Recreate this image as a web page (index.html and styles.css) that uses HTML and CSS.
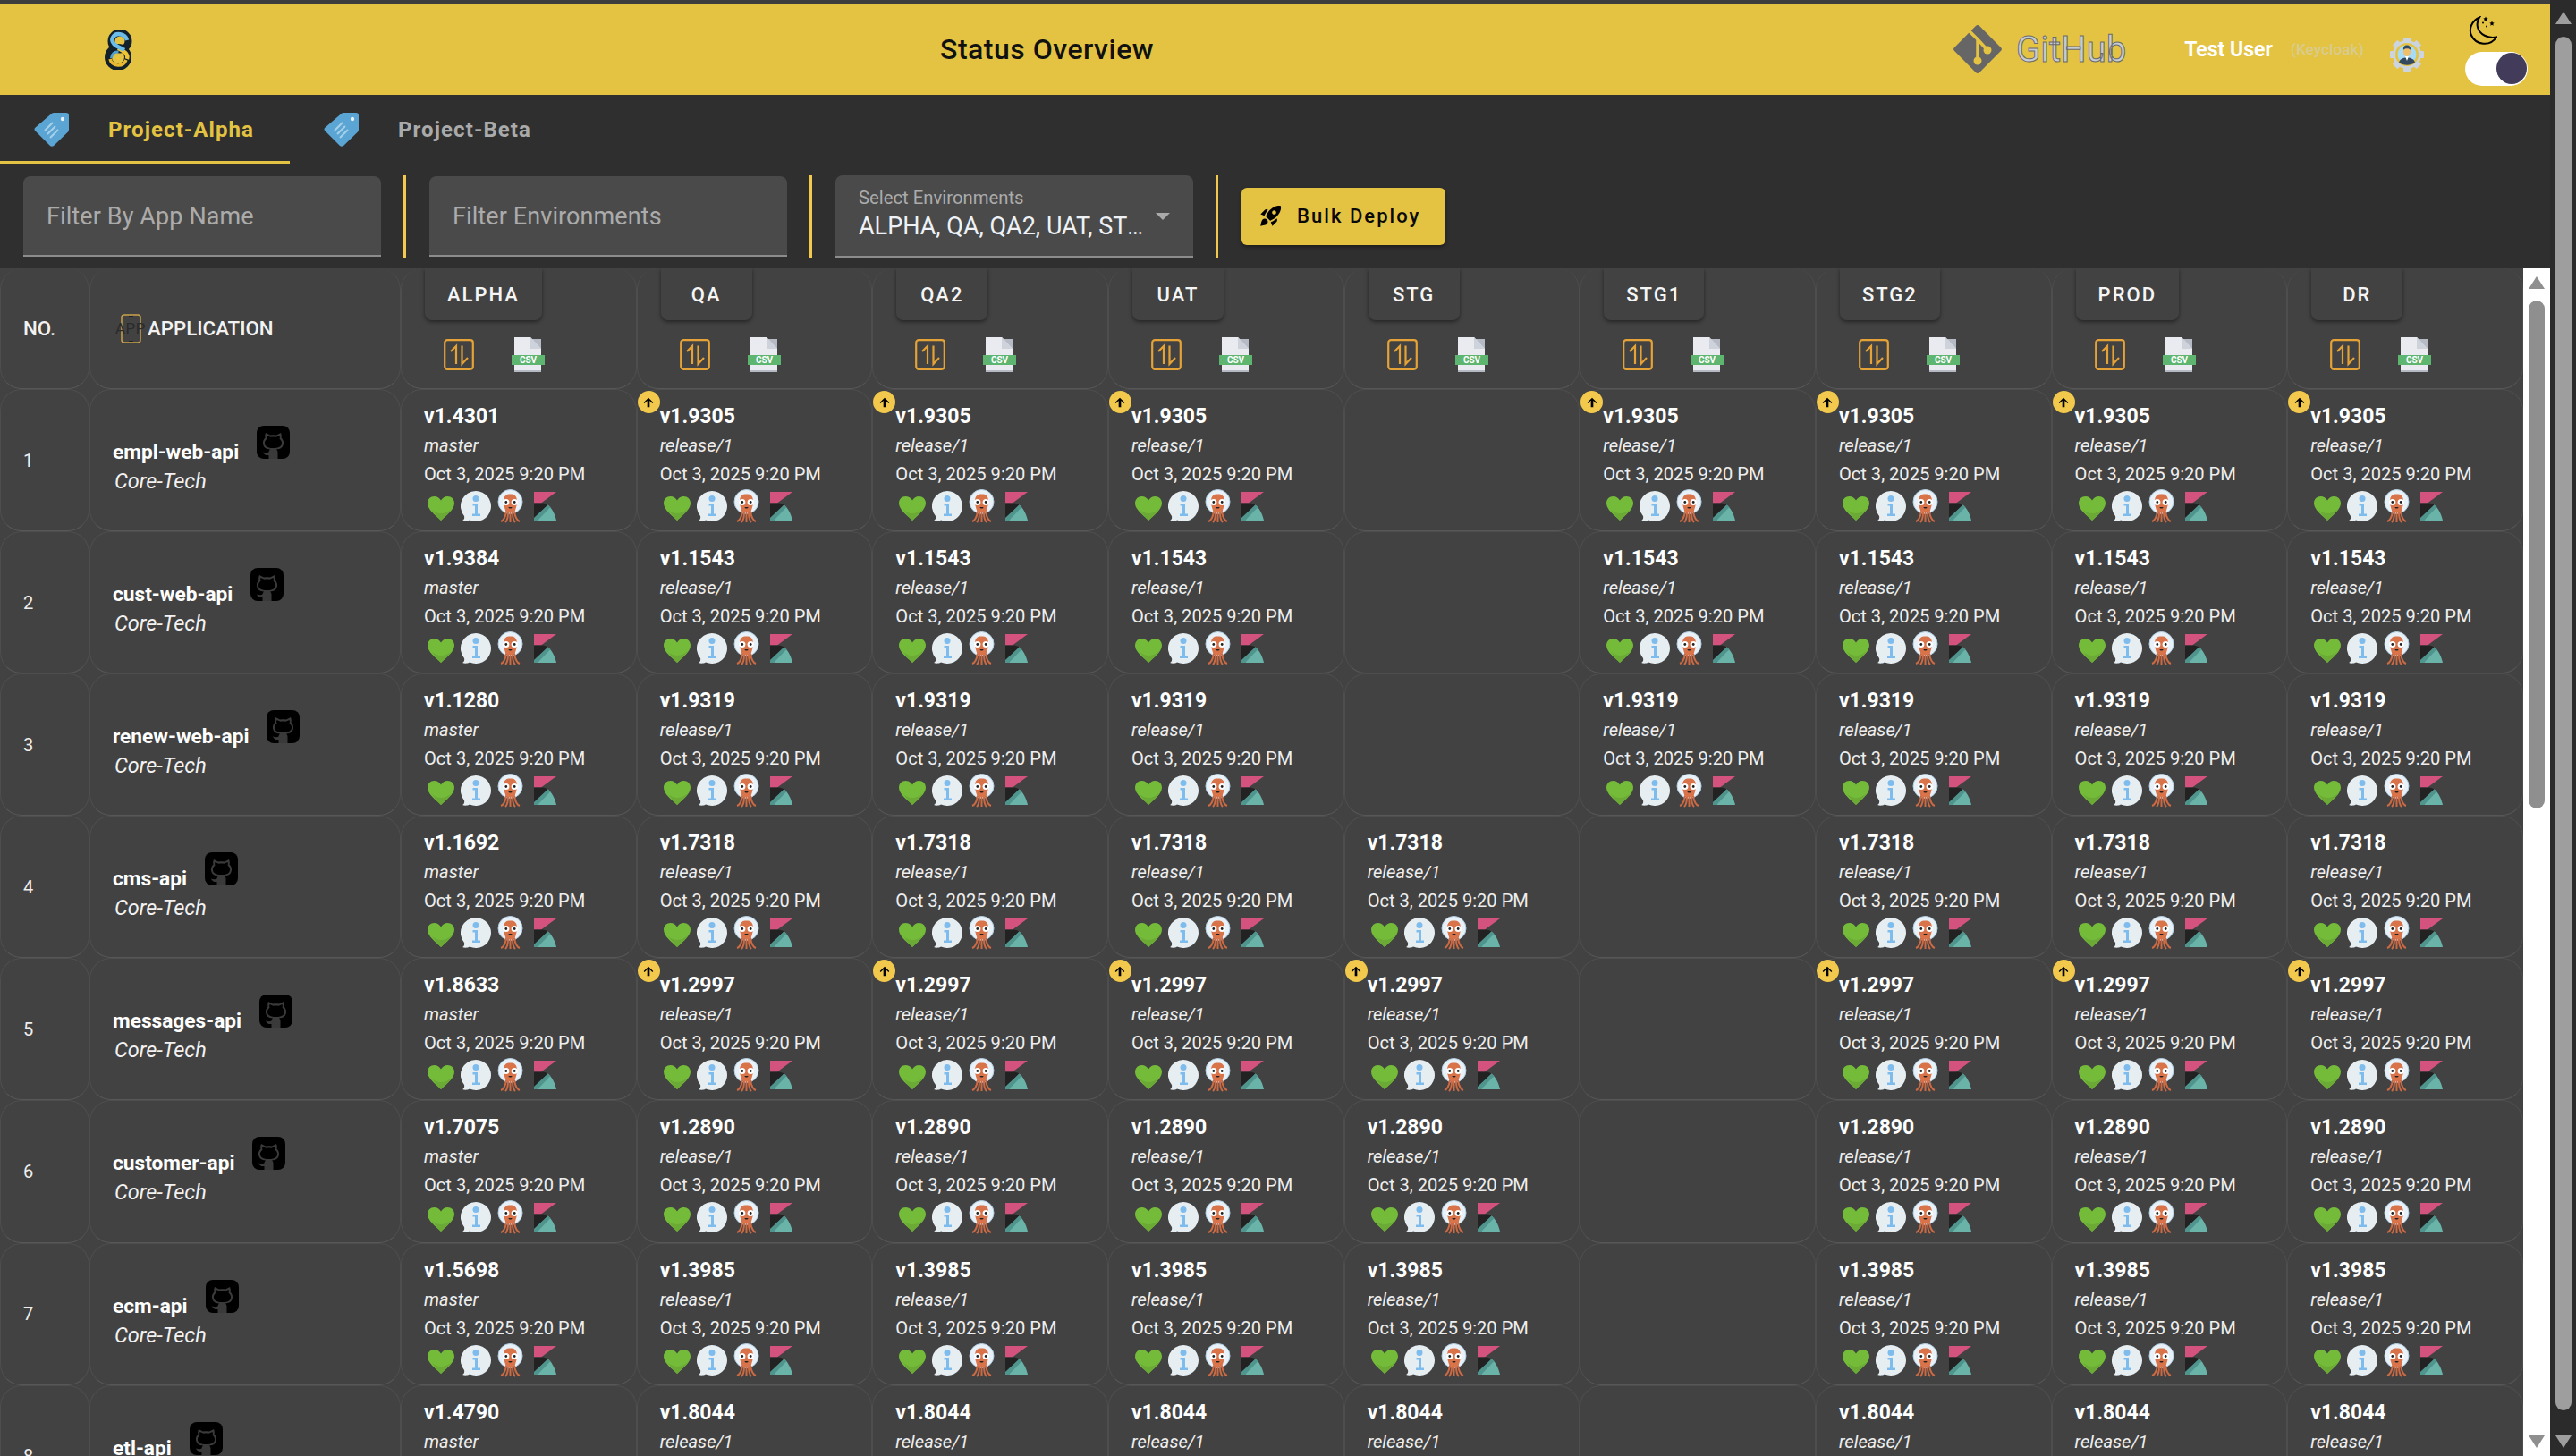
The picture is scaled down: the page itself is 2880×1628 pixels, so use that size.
FILE: index.html
```html
<!DOCTYPE html>
<html>
<head>
	<title>Status Overview</title>
	<link rel="stylesheet" href="styles.css">
</head>
<body>
	<svg class="sprite">
		<symbol id="icon-heart" viewBox="0 0 30 27">
			<path d="M15 27C9 21 0 15 0 7.5 0 3 3.4 0 7.5 0 10.800 0 13.500 1.800 15 4.500 16.500 1.800 19.200 0 22.500 0 26.600 0 30 3 30 7.500 30 15 21 21 15 27z" fill="#74bb3a"/>
			<path d="M5 15C12 21 20 20 27 14 24 19 19 23 15 27 11 23 8 19 5 15z" fill="#6aaa35"/>
		</symbol>
		<symbol id="icon-info" viewBox="0 0 34 34">
			<path d="M17 0a17 17 0 1 1-7 32.500C8 34 4 34 2 33c2-1 2.500-3 2-5A17 17 0 0 1 17 0z" fill="#e7eef2"/>
			<circle cx="17" cy="8.500" r="3.500" fill="#7fbcee"/>
			<path d="M13.500 14h5.500v11.500h3V28h-9v-2.500h3v-9h-2.500z" fill="#7fbcee"/>
		</symbol>
		<symbol id="icon-argo" viewBox="0 0 29 38">
			<circle cx="14.500" cy="14" r="13.500" fill="#e8f1f7" stroke="#b4d0e4"/>
			<path d="M7 14C7 7 10 5.500 14.500 5.500S22 7 22 14c0 5-2 8-2.500 12H9.500C9 22 7 19 7 14z" fill="#d8734a"/>
			<path d="M10 25c-1 6-3 10-6 11M12 26c0 5-1 9-3 11M14.500 26v11M17 26c0 5 1 9 3 11M19 25c1 6 3 10 6 11" stroke="#cc6a44" stroke-width="2" fill="none"/>
			<circle cx="9.800" cy="14.500" r="3.600" fill="#fff"/>
			<circle cx="19.200" cy="14.500" r="3.600" fill="#fff"/>
			<circle cx="9.800" cy="14.500" r="1.400" fill="#222"/>
			<circle cx="19.200" cy="14.500" r="1.400" fill="#222"/>
			<path d="M12.500 20h4c0 2-4 2-4 0z" fill="#222"/>
		</symbol>
		<symbol id="icon-kibana" viewBox="0 0 25 32">
			<path d="M0 0h25L8 12.500H0z" fill="#d4527e"/>
			<path d="M0 12.500h8c3 0 5 .5 7.500 2L0 29z" fill="#222"/>
			<path d="M15.500 14.500C20 18 23.500 25 25 32H4z" fill="#6ab3a9"/>
			<path d="M15.500 14.500L0 29v3h4l14.500-15c-1-1-2-1.800-3-2.500z" fill="#4f958e"/>
		</symbol>
		<symbol id="icon-sort" viewBox="0 0 34 35">
			<rect x="1.200" y="1.200" width="31.600" height="32.600" rx="3" fill="none" stroke="#e5a236" stroke-width="2.200"/>
			<path d="M14 28V8L8 14M20.500 7.500V28L27 21" fill="none" stroke="#e5a236" stroke-width="2.200"/>
		</symbol>
		<symbol id="icon-csv" viewBox="0 0 37 39">
			<path d="M3 2h30v37H3z" fill="#b5bac4"/>
			<path d="M3 0h18l12 13v24H3z" fill="#e9ebf0"/>
			<path d="M21 0l12 13H21z" fill="#ced2db"/>
			<path d="M0 20h37v11H0z" fill="#5eb56f"/>
			<text x="18.500" y="29" text-anchor="middle" class="csv-text">CSV</text>
		</symbol>
		<symbol id="icon-github" viewBox="0 0 37 37">
			<rect width="37" height="37" rx="8" fill="#000"/>
			<path d="M10 8l5 2.500c2.500-.5 4.500-.5 7 0L27 8c1 2.500 1 4 .5 5.500 2 2 2.800 4.200 2.500 6.500-.5 4.500-3.500 6-8 6.500 1 1 1.500 2 1.500 3.500V37h-10v-4c-3 .5-5-.5-6.500-3.500 2 .5 4.500 1.500 6.500 0 0-1 .5-2 1.500-3-4.500-.5-7.500-2-8-6.500-.3-2.300.5-4.500 2.500-6.500C9 12 9 10.500 10 8z" fill="#3a3a3a"/>
			<path d="M11.500 11l4 1.800c2-.4 4-.4 6 0l4-1.800c.5 1.500.5 2.500 0 3.500 2 2 2.800 3.500 2.500 5.500-.5 3.500-3.500 5-9.500 5s-9-1.500-9.500-5c-.3-2 .5-3.500 2.500-5.500-.5-1-.5-2 0-3.500z" fill="#000"/>
		</symbol>
		<symbol id="icon-tag" viewBox="0 0 39 38">
			<path d="M19 1.500Q20 0 22 0H36Q39 0 39 3V19Q39 20.500 38 21.500L22 37Q20 38.500 18 37L1 20Q0 18.500 1 17z" fill="#5aa5d3"/>
			<circle cx="32" cy="7" r="2.200" fill="#e8f2f8"/>
			<path d="M12 20L21 11M15 24L24 15M18 28L27 19" stroke="#a8d0e8" stroke-width="2"/>
		</symbol>
	</svg>

	<div class="page">
		<div class="topline"></div>
		<header class="topbar">
			<svg class="logo" viewBox="0 0 34 44">
				<circle cx="18" cy="12" r="9.500" fill="none" stroke="#12202c" stroke-width="8"/>
				<circle cx="16" cy="30" r="11" fill="none" stroke="#12202c" stroke-width="8"/>
				<path d="M26 32C28 26 22 23 16 20" fill="none" stroke="#f0c534" stroke-width="4.500"/>
				<path d="M7 32a9.500 9.500 0 0 0 18 1" fill="none" stroke="#e8b92e" stroke-width="3.500"/>
				<path d="M26 11C24 3 13 2 10 8 7 15 16 18 23 22" fill="none" stroke="#6cbcea" stroke-width="4.500"/>
				<path d="M8.500 31a7 7 0 0 1 8-7" fill="none" stroke="#4f9fd0" stroke-width="3"/>
				<circle cx="16" cy="31" r="2" fill="#f0c534"/>
			</svg>
			<h1 class="title">Status Overview</h1>
			<svg class="git-mark" viewBox="0 0 56 56">
				<rect x="8.200" y="8.200" width="39.600" height="39.600" rx="3" transform="rotate(45 28 28)" fill="#666666"/>
				<path d="M19 8l9 9v23M28 17l11 12" fill="none" stroke="#e4c342" stroke-width="3.500"/>
				<circle cx="28" cy="41" r="4.500" fill="#e4c342"/>
				<circle cx="39" cy="29" r="4.500" fill="#e4c342"/>
			</svg>
			<span class="git-text">GitHub</span>
			<span class="user-name">Test User</span>
			<span class="user-realm">(Keycloak)</span>
			<svg class="avatar" viewBox="0 0 38 38">
				<g fill="#ccd4e0">
					<rect x="15" y="0" width="8" height="38" rx="1"/>
					<rect x="15" y="0" width="8" height="38" rx="1" transform="rotate(45 19 19)"/>
					<rect x="15" y="0" width="8" height="38" rx="1" transform="rotate(90 19 19)"/>
					<rect x="15" y="0" width="8" height="38" rx="1" transform="rotate(135 19 19)"/>
					<circle cx="19" cy="19" r="16"/>
				</g>
				<circle cx="19" cy="19" r="13" fill="#e4c342"/>
				<circle cx="19" cy="19" r="10.500" fill="#a6dcf6"/>
				<path d="M10 28c1-4 4-5 9-6 5 1 8 2 9 6-5 3.500-13 3.500-18 0z" fill="#34495e"/>
				<path d="M17 21h4l-2 5z" fill="#fff"/>
				<ellipse cx="19" cy="15.500" rx="4" ry="5.500" fill="#f1be6c"/>
				<path d="M15 14c-.5-4 1.500-5.500 4-5.500s4.500 1.500 4 5.500c-1-2.500-7-2.500-8 0z" fill="#34495e"/>
			</svg>
			<div class="theme">
				<svg class="moon" viewBox="0 0 32 32">
					<path d="M12 1C3 5 0 14 3 21 8 32 24 34 31 23 22 25 12 20 10 12 9 8 10 4 12 1z" fill="none" stroke="#000" stroke-width="2"/>
					<path d="M19 0l.8 1.800 1.900.2-1.400 1.300.4 1.900-1.700-1-1.700 1 .4-1.900L16.300 2l1.900-.2zM26 5l.8 1.800 1.900.2-1.400 1.300.4 1.900-1.700-1-1.700 1 .4-1.900L23.300 7l1.900-.2z" fill="#000"/>
					<circle cx="16" cy="7" r="1" fill="#000"/>
					<circle cx="20" cy="11" r="1" fill="#000"/>
				</svg>
				<div class="switch"><span class="knob"></span></div>
			</div>
		</header>

		<nav class="tabs">
			<a class="tab tab-active"><svg class="tab-icon"><use href="#icon-tag"></use></svg>Project-Alpha</a>
			<a class="tab"><svg class="tab-icon"><use href="#icon-tag"></use></svg>Project-Beta</a>
		</nav>

		<div class="filters">
			<input class="field" type="text" placeholder="Filter By App Name">
			<span class="divider"></span>
			<input class="field" type="text" placeholder="Filter Environments">
			<span class="divider"></span>
			<div class="select">
				<label class="select-label">Select Environments</label>
				<div class="select-value">ALPHA, QA, QA2, UAT, STG, STG1, STG2, PROD, DR</div>
				<span class="caret"></span>
			</div>
			<span class="divider"></span>
			<button class="deploy">
				<svg class="rocket" viewBox="0 0 24 24"><path d="M9.190 6.350c-2.040 2.290-3.440 5.580-3.570 5.890L2 10.690l4.050-4.050c.47-.47 1.150-.68 1.810-.55l1.330.26zM11.170 17s3.740-1.550 5.890-3.700c5.400-5.400 4.500-9.620 4.210-10.570-.95-.3-5.170-1.190-10.570 4.210C8.550 9.090 7 12.830 7 12.830L11.170 17zm6.480-2.190c-2.290 2.040-5.580 3.440-5.890 3.570L13.310 22l4.050-4.050c.47-.47.68-1.150.55-1.810l-.26-1.330zM9 18c0 .83-.34 1.580-.88 2.120C6.940 21.300 2 22 2 22s.7-4.940 1.880-6.120C4.420 15.340 5.170 15 6 15c1.660 0 3 1.340 3 3zm4-9c0-1.100.9-2 2-2s2 .9 2 2-.9 2-2 2-2-.9-2-2z"/></svg>
				Bulk Deploy
			</button>
		</div>

		<div class="board">
			<div class="table" id="table"></div>
			<div class="inner-scroll">
				<span class="arrow-up"></span>
				<span class="inner-thumb"></span>
				<span class="arrow-down"></span>
			</div>
		</div>
	</div>

	<div class="page-scroll">
		<span class="arrow-up"></span>
		<span class="page-thumb"></span>
		<span class="arrow-down"></span>
	</div>

	<script src="app.js"></script>
</body>
</html>
```

FILE: styles.css
```css
* {
	box-sizing: border-box;
}

body {
	margin: 0;
	height: 1628px;
	display: flex;
	overflow: hidden;
	background-color: #2f2f2f;
	font-family: Roboto, "Liberation Sans", sans-serif;
	color: #eeeeee;
}

.sprite {
	display: none;
}

.page {
	width: 2851px;
	display: flex;
	flex-direction: column;
}

.topline {
	height: 4px;
	background-color: #3d3d3d;
}

/* yellow bar */
.topbar {
	height: 102px;
	flex: none;
	display: flex;
	align-items: center;
	background-color: #e4c342;
}
.logo {
	width: 34px;
	height: 44px;
	margin-left: 116px;
	margin-top: 1px;
}
.title {
	margin: 0 0 0 901px;
	font-size: 32px;
	font-weight: 500;
	letter-spacing: 0.5px;
	color: #111111;
}
.git-mark {
	width: 56px;
	height: 56px;
	margin-left: 893px;
}
.git-text {
	margin-left: 15px;
	font-size: 40px;
	color: #c6ccd3;
	-webkit-text-stroke: 1px #6b6b6b;
}
.user-name {
	margin-left: 65px;
	font-size: 23px;
	font-weight: 700;
	color: #ffffff;
}
.user-realm {
	margin-left: 20px;
	font-size: 17.300px;
	font-weight: 500;
	color: #d9cb8f;
}
.avatar {
	width: 38px;
	height: 38px;
	margin-left: 29px;
	margin-top: 12px;
}
.theme {
	margin-left: 46px;
	width: 70px;
	display: flex;
	flex-direction: column;
	align-items: flex-start;
	gap: 7px;
	margin-top: 3px;
}
.moon {
	width: 32px;
	height: 33px;
	margin-left: 4px;
}
.switch {
	width: 70px;
	height: 38px;
	padding: 1px;
	display: flex;
	justify-content: flex-end;
	border-radius: 19px;
	background-color: #ffffff;
}
.knob {
	width: 34px;
	height: 35px;
	border-radius: 50%;
	background-color: #423b5a;
}

/* project tabs */
.tabs {
	height: 77px;
	flex: none;
	display: flex;
}
.tab {
	display: flex;
	align-items: center;
	gap: 44px;
	padding: 3px 40px 0 38px;
	font-size: 24px;
	font-weight: 700;
	letter-spacing: 1.080px;
	color: #aaaaaa;
	border-bottom: 3px solid transparent;
}
.tab-active {
	color: #e4c342;
	border-bottom-color: #e4c342;
}
.tab-icon {
	width: 39px;
	height: 38px;
}

/* filter row */
.filters {
	height: 92px;
	flex: none;
	margin-top: 13px;
	padding-left: 26px;
	display: flex;
	align-items: center;
}
.field {
	width: 400px;
	height: 90px;
	padding: 2px 26px 0;
	background-color: #4a4a4a;
	border: 0;
	border-bottom: 2px solid #8c8c8c;
	border-radius: 8px 8px 0 0;
	font-family: inherit;
	font-size: 27px;
	letter-spacing: 0.100px;
	color: #eeeeee;
}
.field::placeholder {
	color: #ababab;
	opacity: 1;
}
.divider {
	width: 3px;
	height: 92px;
	margin: 0 26px 0 25px;
	background-color: #f2c94c;
}
.select {
	position: relative;
	width: 400px;
	height: 92px;
	padding: 13px 26px 0;
	background-color: #4a4a4a;
	border-bottom: 2px solid #8c8c8c;
	border-radius: 8px 8px 0 0;
}
.select-label {
	display: block;
	font-size: 20.300px;
	line-height: 24px;
	color: #ababab;
}
.select-value {
	width: 322px;
	margin-top: 3px;
	font-size: 27px;
	line-height: 34px;
	color: #eef2f6;
	white-space: nowrap;
	overflow: hidden;
	text-overflow: ellipsis;
}
.caret {
	position: absolute;
	top: 42px;
	right: 26px;
	border-left: 8px solid transparent;
	border-right: 8px solid transparent;
	border-top: 8px solid #aaaaaa;
}
.deploy {
	width: 228px;
	height: 64px;
	padding: 0 0 2px 19px;
	display: flex;
	align-items: center;
	gap: 15px;
	background-color: #e4c342;
	border: 0;
	border-radius: 6px;
	box-shadow: 0 2px 4px rgba(0, 0, 0, 0.4);
	font-family: inherit;
	font-size: 22px;
	font-weight: 500;
	letter-spacing: 2.050px;
	color: #0a0a0a;
}
.rocket {
	width: 28px;
	height: 28px;
}

/* status table */
.board {
	flex: 1;
	min-height: 0;
	margin-top: 12px;
	display: flex;
	background-color: #424242;
}
.table {
	width: 2821px;
	flex: none;
	display: grid;
	grid-template-columns: 100px 348px repeat(9, 263.67px);
	grid-template-rows: 135px;
	grid-auto-rows: 159.1px;
	overflow: hidden;
}
.cell {
	position: relative;
	border: 1px solid #4e4e4e;
	border-bottom-color: #575757;
	border-radius: 24px;
	background-color: #424242;
}
.head {
	border-top: 0;
}
.head-text {
	font-size: 22.300px;
	font-weight: 500;
	color: #f2f2f2;
}
.no-head {
	display: flex;
	align-items: center;
	padding-left: 25px;
}
.app-head {
	display: flex;
	align-items: center;
	gap: 2px;
	padding-left: 28px;
}
.app-mark {
	display: grid;
	place-items: center;
	width: 34px;
}
.app-mark svg, .app-mark span {
	grid-area: 1 / 1;
}
.app-mark svg {
	width: 23px;
	height: 33px;
}
.app-mark span {
	font-size: 17px;
	letter-spacing: 0.5px;
	color: #2b2b2b;
}
.env-head {
	padding-left: 26px;
}
.env-label {
	display: inline-block;
	min-width: 102px;
	height: 58px;
	padding: 0 25px;
	border-radius: 0 0 8px 8px;
	box-shadow: 0 2px 4px rgba(0, 0, 0, 0.45);
	font-size: 22px;
	font-weight: 500;
	line-height: 60px;
	letter-spacing: 2px;
	text-align: center;
	color: #f5f5f5;
}
.env-tools {
	display: flex;
	align-items: center;
	gap: 42px;
	margin-top: 19px;
	padding-left: 21px;
}
.sort-icon {
	width: 34px;
	height: 35px;
}
.csv-icon {
	width: 37px;
	height: 39px;
}
.csv-text {
	font-family: Roboto, sans-serif;
	font-size: 10px;
	font-weight: 700;
	fill: #ffffff;
}

.no-cell {
	display: flex;
	align-items: center;
	padding: 0 0 0 25px;
	font-size: 20px;
}
.app-cell {
	padding: 40px 0 0 25px;
}
.app-top {
	display: flex;
	gap: 20px;
	height: 47px;
}
.app-name {
	margin-top: 15px;
	font-size: 22.7px;
	font-weight: 700;
	line-height: 30px;
	color: #ffffff;
}
.git-icon {
	width: 37px;
	height: 37px;
}
.app-team {
	padding-left: 2px;
	font-size: 23.500px;
	font-style: italic;
	line-height: 30px;
	color: #f2f2f2;
}

.env-cell {
	padding: 14px 0 0 25px;
}
.version {
	font-size: 23px;
	font-weight: 700;
	line-height: 32px;
	color: #ffffff;
}
.branch {
	margin-top: 1px;
	font-size: 20.100px;
	font-style: italic;
	line-height: 30px;
	color: #eeeeee;
}
.date {
	margin-top: 2px;
	font-size: 20.100px;
	line-height: 30px;
	color: #eeeeee;
}
.links {
	display: flex;
	align-items: center;
	height: 38px;
	margin-top: 2px;
	padding-left: 4px;
}
.heart-icon {
	width: 30px;
	height: 27px;
	margin-top: 4px;
}
.info-icon {
	width: 34px;
	height: 34px;
	margin-left: 7px;
}
.argo-icon {
	width: 29px;
	height: 38px;
	margin-left: 7px;
}
.kibana-icon {
	width: 25px;
	height: 32px;
	margin-left: 12px;
}
.badge {
	position: absolute;
	top: 1px;
	left: 0;
	width: 25px;
	height: 25px;
	display: flex;
	align-items: center;
	justify-content: center;
	border-radius: 50%;
	background-color: #f2c94c;
}
.badge svg {
	width: 16px;
	height: 16px;
}

/* scrollbars */
.inner-scroll {
	width: 30px;
	flex: none;
	display: flex;
	flex-direction: column;
	align-items: center;
	background-color: #ffffff;
	--bar: #8f8f8f;
}
.inner-thumb {
	width: 18px;
	height: 568px;
	margin-top: 13px;
	margin-bottom: auto;
	border-radius: 9px;
	background-color: var(--bar);
}
.page-scroll {
	width: 29px;
	flex: none;
	padding-right: 5px;
	padding-left: 6px;
	display: flex;
	flex-direction: column;
	align-items: center;
	background-color: #2b2b2b;
	--bar: #9e9e9e;
}
.page-thumb {
	width: 18px;
	height: 1536px;
	margin-top: 14px;
	margin-bottom: auto;
	border-radius: 9px;
	background-color: var(--bar);
}
.arrow-up {
	margin-top: 9px;
	border-left: 9px solid transparent;
	border-right: 9px solid transparent;
	border-bottom: 14px solid var(--bar);
}
.arrow-down {
	margin-bottom: 9px;
	border-left: 9px solid transparent;
	border-right: 9px solid transparent;
	border-top: 14px solid var(--bar);
}
.page-scroll .arrow-up {
	margin-top: 13px;
}
```

FILE: app.js
```js
var envs = ['ALPHA', 'QA', 'QA2', 'UAT', 'STG', 'STG1', 'STG2', 'PROD', 'DR'];

// gap is the environment with no deployment, bumps get the yellow arrow
var apps = [
	{name: 'empl-web-api', first: 'v1.4301', rest: 'v1.9305', gap: 'STG', bumps: ['QA', 'QA2', 'UAT', 'STG1', 'STG2', 'PROD', 'DR']},
	{name: 'cust-web-api', first: 'v1.9384', rest: 'v1.1543', gap: 'STG', bumps: []},
	{name: 'renew-web-api', first: 'v1.1280', rest: 'v1.9319', gap: 'STG', bumps: []},
	{name: 'cms-api', first: 'v1.1692', rest: 'v1.7318', gap: 'STG1', bumps: []},
	{name: 'messages-api', first: 'v1.8633', rest: 'v1.2997', gap: 'STG1', bumps: ['QA', 'QA2', 'UAT', 'STG', 'STG2', 'PROD', 'DR']},
	{name: 'customer-api', first: 'v1.7075', rest: 'v1.2890', gap: 'STG1', bumps: []},
	{name: 'ecm-api', first: 'v1.5698', rest: 'v1.3985', gap: 'STG1', bumps: []},
	{name: 'etl-api', first: 'v1.4790', rest: 'v1.8044', gap: 'STG1', bumps: []}
];

function icon(id, cls) {
	return '<svg class="' + cls + '"><use href="#icon-' + id + '"></use></svg>';
}

function headCells() {
	var html = '<div class="cell head no-head"><span class="head-text">NO.</span></div>';
	html += '<div class="cell head app-head"><div class="app-mark"><svg viewBox="0 0 23 33">' +
		'<rect x="1" y="1" width="21" height="31" rx="3" fill="none" stroke="#c9a24a" stroke-width="1.500"/>' +
		'<path d="M9 2.500h5M9 30.500h5" stroke="#222" stroke-width="1"/></svg>' +
		'<span>APP</span></div><span class="head-text">APPLICATION</span></div>';
	for (var i = 0; i < envs.length; i++) {
		html += '<div class="cell head env-head"><div class="env-label">' + envs[i] + '</div>' +
			'<div class="env-tools">' + icon('sort', 'sort-icon') + icon('csv', 'csv-icon') + '</div></div>';
	}
	return html;
}

function envCell(app, env, index) {
	if (env == app.gap) {
		return '<div class="cell"></div>';
	}
	var badge = '';
	if (app.bumps.indexOf(env) != -1) {
		badge = '<span class="badge"><svg viewBox="0 0 24 24"><path d="M4 12l1.410 1.410L10 8.830V20h4V8.830l4.580 4.590L20 12l-8-8-8 8z"/></svg></span>';
	}
	return '<div class="cell env-cell">' + badge +
		'<div class="version">' + (index == 0 ? app.first : app.rest) + '</div>' +
		'<div class="branch">' + (index == 0 ? 'master' : 'release/1') + '</div>' +
		'<div class="date">Oct 3, 2025 9:20 PM</div>' +
		'<div class="links">' + icon('heart', 'heart-icon') + icon('info', 'info-icon') +
		icon('argo', 'argo-icon') + icon('kibana', 'kibana-icon') + '</div></div>';
}

var html = headCells();
for (var r = 0; r < apps.length; r++) {
	html += '<div class="cell no-cell">' + (r + 1) + '</div>';
	html += '<div class="cell app-cell"><div class="app-top"><span class="app-name">' + apps[r].name + '</span>' +
		icon('github', 'git-icon') + '</div><div class="app-team">Core-Tech</div></div>';
	for (var e = 0; e < envs.length; e++) {
		html += envCell(apps[r], envs[e], e);
	}
}
document.getElementById('table').innerHTML = html;
```
